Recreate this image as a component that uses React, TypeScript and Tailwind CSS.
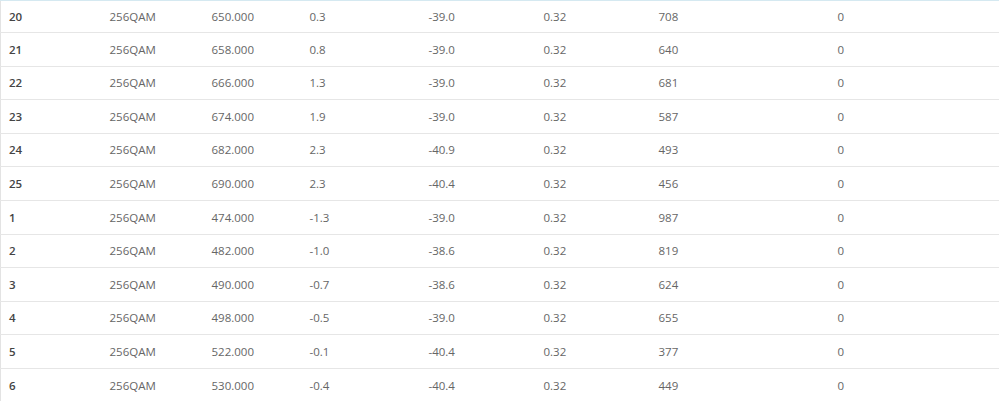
const rows: string[][] = [
  ['20', '256QAM', '650.000', '0.3', '-39.0', '0.32', '708', '0'],
  ['21', '256QAM', '658.000', '0.8', '-39.0', '0.32', '640', '0'],
  ['22', '256QAM', '666.000', '1.3', '-39.0', '0.32', '681', '0'],
  ['23', '256QAM', '674.000', '1.9', '-39.0', '0.32', '587', '0'],
  ['24', '256QAM', '682.000', '2.3', '-40.9', '0.32', '493', '0'],
  ['25', '256QAM', '690.000', '2.3', '-40.4', '0.32', '456', '0'],
  ['1', '256QAM', '474.000', '-1.3', '-39.0', '0.32', '987', '0'],
  ['2', '256QAM', '482.000', '-1.0', '-38.6', '0.32', '819', '0'],
  ['3', '256QAM', '490.000', '-0.7', '-38.6', '0.32', '624', '0'],
  ['4', '256QAM', '498.000', '-0.5', '-39.0', '0.32', '655', '0'],
  ['5', '256QAM', '522.000', '-0.1', '-40.4', '0.32', '377', '0'],
  ['6', '256QAM', '530.000', '-0.4', '-40.4', '0.32', '449', '0'],
]

export default function App() {
  return (
    <div className="w-[999px] h-[401px] overflow-hidden bg-white">
      <table
        className="w-full table-fixed border-collapse border-t border-l border-t-[#d5e9f1] border-l-[#e3e3e3] text-[11.5px] text-[#666]"
        style={{ fontFamily: '"Open Sans", "Noto Sans", sans-serif' }}
      >
        <colgroup>
          <col className="w-[101px]" />
          <col className="w-[102px]" />
          <col className="w-[98px]" />
          <col className="w-[119px]" />
          <col className="w-[115px]" />
          <col className="w-[115px]" />
          <col className="w-[179px]" />
          <col />
        </colgroup>
        <tbody>
          {rows.map((r, i) => (
            <tr
              key={i}
              className={`border-b border-[#e6e6e6] ${i === 0 ? 'h-[32px]' : 'h-[33.6px]'}`}
            >
              {r.map((c, j) => (
                <td
                  key={j}
                  className={`px-2 py-0 align-middle whitespace-nowrap ${j === 0 ? 'font-semibold text-[#444]' : ''}`}
                >
                  {c}
                </td>
              ))}
            </tr>
          ))}
        </tbody>
      </table>
    </div>
  )
}
